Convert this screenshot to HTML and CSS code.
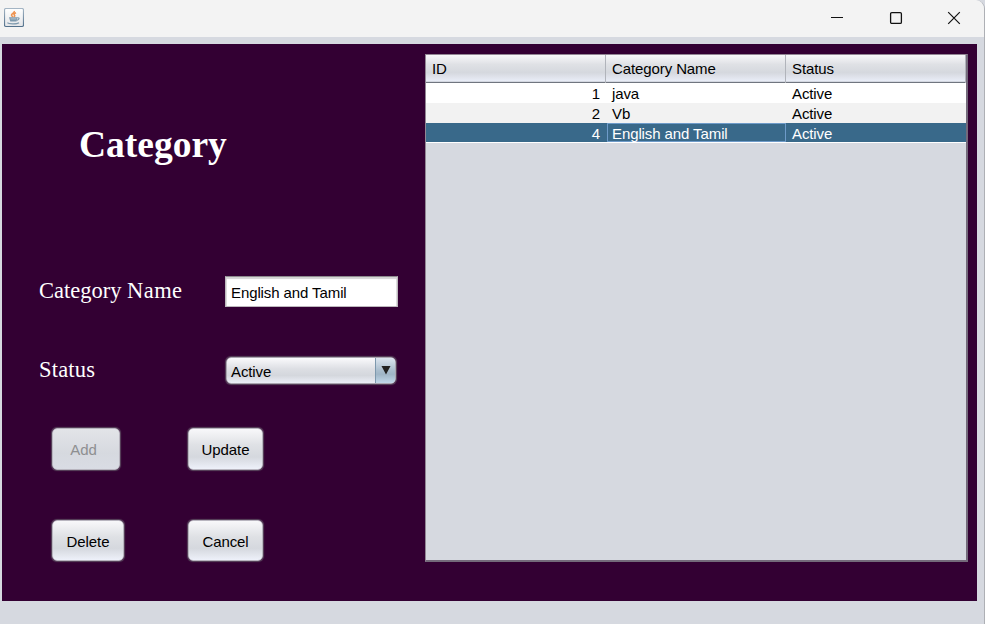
FILE: index.html
```html
<!DOCTYPE html>
<html lang="en">
<head>
<meta charset="utf-8">
<title>Category</title>
<link rel="stylesheet" href="styles.css">
</head>
<body>
<div class="window">
  <header class="titlebar">
    <svg class="app-icon" width="20" height="20" viewBox="0 0 20 20">
      <defs>
        <linearGradient id="edge" x1="0" y1="0" x2="0" y2="1"><stop offset="0" stop-color="#a4b5c4"/><stop offset="1" stop-color="#53718c"/></linearGradient>
        <linearGradient id="face" x1="0" y1="0" x2="0" y2="1"><stop offset="0" stop-color="#ffffff"/><stop offset="1" stop-color="#e3e5e8"/></linearGradient>
      </defs>
      <rect x=".5" y=".5" width="19" height="18" rx="1.500" fill="url(#face)" stroke="url(#edge)" stroke-width="1.200"/>
      <path d="M10.300 3c.5 2-3 2.500-2.800 4.200.2 1 1.300 1.100 1.500 1.900M12 4.800c-2 .8-2.500 1.600-1.500 2.400.5.600 0 1.200-.5 1.500" fill="none" stroke="#ee9350" stroke-width="1.600"/>
      <path d="M5 9.300h8.500l-1 4.200H6.300z" fill="#7d99ad"/>
      <path d="M6.500 10.900h6" stroke="#c1ced8" stroke-width=".8"/>
      <path d="M13.300 9.800c2.700-.5 2.200 2-.6 2.600M3.500 14.700c1 1.500 9.500 1.500 11.500 0" fill="none" stroke="#7d99ad" stroke-width="1.200"/>
    </svg>
    <div class="controls">
      <svg width="14" height="14" viewBox="0 0 14 14"><path d="M1 6.500h12" stroke="#111"/></svg>
      <svg width="14" height="14" viewBox="0 0 14 14"><rect x="1.600" y="1.600" width="10.800" height="10.800" rx="1.200" fill="none" stroke="#111" stroke-width="1.300"/></svg>
      <svg width="14" height="14" viewBox="0 0 14 14"><path d="M1.200 1.200l11.600 11.600M12.800 1.200L1.200 12.800" stroke="#111" stroke-width="1.200"/></svg>
    </div>
  </header>
  <main class="panel">
    <section class="form">
      <h1>Category</h1>
      <div class="field name-field">
        <label>Category <span class="wide">Name</span></label>
        <div class="textbox">English and Tamil</div>
      </div>
      <div class="field status-field">
        <label>Status</label>
        <div class="combo"><span>Active</span><span class="arrow"><svg width="10" height="9" viewBox="0 0 10 9"><path d="M.5 0h9L5 8.500z" fill="#222"/></svg></span></div>
      </div>
      <div class="buttons">
        <div class="button add">Add</div>
        <div class="button update">Update</div>
        <div class="button delete">Delete</div>
        <div class="button cancel">Cancel</div>
      </div>
    </section>
    <section class="table">
      <div class="row head"><div>ID</div><div>Category Name</div><div>Status</div></div>
      <div class="row"><div class="id">1</div><div>java</div><div>Active</div></div>
      <div class="row alt"><div class="id">2</div><div>Vb</div><div>Active</div></div>
      <div class="row selected"><div class="id">4</div><div class="focus">English and Tamil</div><div>Active</div></div>
    </section>
  </main>
</div>
</body>
</html>
```
FILE: styles.css
```css
* { box-sizing: border-box; }
body {
  margin: 0;
  background: #d6d9e0;
  font: 15px/20px "Liberation Sans", Arial, sans-serif;
  letter-spacing: -.1px;
  color: #000;
  overflow: hidden;
}
svg { display: block; }
.window {
  width: 985px;
  height: 624px;
  background: #d6d9e0;
  border-right: 1px solid #aeb0b5;
  border-top-right-radius: 9px;
  overflow: hidden;
}
.titlebar {
  height: 37px;
  padding: 8px 23px 0 4px;
  background: #f3f3f3;
  display: flex;
  justify-content: space-between;
}
.controls { display: flex; gap: 44.5px; padding-top: 3px; }
.panel {
  width: 975px;
  height: 557px;
  margin: 7px 0 0 2px;
  padding: 10px 9px 0 0;
  background: #330033;
  display: grid;
  grid-template-columns: 423px 543px;
}
.form { padding-left: 37px; }
h1 {
  margin: 69px 0 0 40px;
  font: bold 37.5px/44px "Liberation Serif", "Times New Roman", serif;
  letter-spacing: 0;
  color: #fff;
}
.field { display: grid; grid-template-columns: 186px 173px; }
.field label {
  font: 22.5px/28px "Liberation Serif", "Times New Roman", serif;
  letter-spacing: 0;
  color: #fff;
  white-space: nowrap;
}
.field .wide { letter-spacing: .4px; }
.name-field { margin-top: 109px; height: 31px; }
.name-field label { padding-top: 1px; }
.status-field { margin-top: 49px; height: 29px; }
.status-field label { letter-spacing: .2px; }
.textbox {
  height: 31px;
  padding: 6px 5px 0;
  background: #fff;
  border: 1px solid #bdb8bd;
  border-top-color: #8d8a8e;
  box-shadow: inset 0 2px 1px #d4d4d4, inset 1px 0 #dedede, inset -1px 0 #dedede;
}
.combo {
  width: 170px;
  height: 27px;
  margin: 1px 0 0 1px;
  padding-left: 4px;
  border: 1px solid #aaa5b0;
  border-radius: 5px;
  background: linear-gradient(#fafafc, #dcdee3 45%, #d4d7dd 70%, #eceff7);
  box-shadow: 0 0 1px 1px #59465d;
  display: flex;
  justify-content: space-between;
  line-height: 28px;
}
.arrow {
  width: 20px;
  padding: 8px 0 0 5px;
  border-left: 1px solid #7d98ad;
  border-radius: 0 4px 4px 0;
  background: linear-gradient(#dce5ef, #a9bdcd 50%, #9fb5c6 65%, #c1d8ea);
}
.buttons {
  margin: 43px 0 0 13px;
  display: grid;
  grid-template-columns: 136px 75px;
  grid-template-rows: 92px 42px;
}
.button {
  width: 75px;
  height: 41px;
  border: 1px solid #b8b5bf;
  border-radius: 5px;
  background: linear-gradient(#f8f8fa, #dfe1e5 40%, #d5d8de 70%, #eef1fa);
  box-shadow: 0 0 1px 1px #59465d;
  text-align: center;
  line-height: 41px;
}
.add {
  width: 68px;
  height: 42px;
  padding-right: 5px;
  color: #8e8f91;
  background: linear-gradient(#e2e4e8, #d6d9df 60%, #d9dce4);
}
.update { height: 42px; }
.delete { width: 72px; }
.table {
  width: 543px;
  height: 508px;
  border: 1px solid #928794;
  border-right: 2px solid #746a7b;
  border-bottom: 2px solid #746a7b;
  background: #d6d9e0;
}
.row {
  display: grid;
  grid-template-columns: 180px 180px 180px;
  height: 20px;
  line-height: 21px;
  background: #fff;
}
.row > div { padding-left: 6px; white-space: nowrap; }
.row > .id { padding: 0 6px 0 0; text-align: right; }
.head {
  height: 28px;
  line-height: 28px;
  border-bottom: 1px solid #70757f;
  background: linear-gradient(#f8f8fa, #dfe1e5 35%, #d5d8de 65%, #e8ecf6 95%, #c7cbd3);
}
.head > div { border-right: 1px solid #b1b4bb; }
.alt { background: #f2f2f2; }
.selected { grid-template-rows: 19px; color: #fff; background: #39698a; border-bottom: 1px solid #fff; }
.row > .focus { height: 19px; margin-left: 1px; padding-left: 4px; border: 1px solid #6e9bc9; line-height: 19px; }
```
